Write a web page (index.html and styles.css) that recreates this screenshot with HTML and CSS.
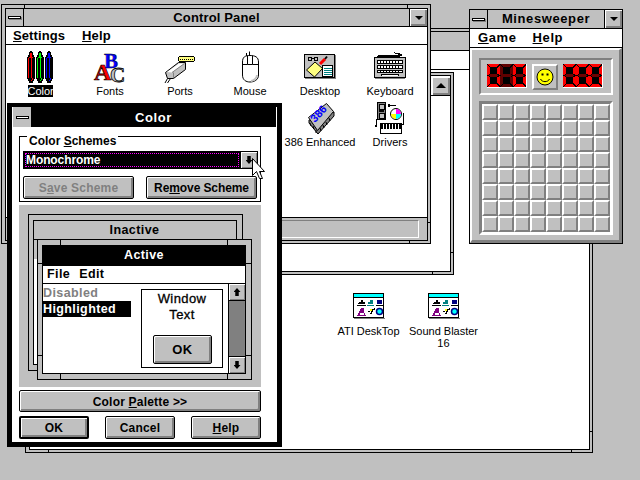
FILE: index.html
```html
<!DOCTYPE html>
<html lang="en">
<head>
<meta charset="utf-8">
<title>Windows 3.1 Control Panel</title>
<link rel="stylesheet" href="styles.css">
</head>
<body>
<div class="win progman">
  <div class="inner">
    <div class="titlebar"></div>
    <div class="menubar"></div>
    <div class="pm-client">
      <div class="pm-icon">
        <svg class="ico" width="32" height="26" viewBox="0 0 32 26" shape-rendering="crispEdges"><use href="#groupicon"/></svg>
        <span class="label">ATI DeskTop</span>
      </div>
      <div class="pm-icon">
        <svg class="ico" width="32" height="26" viewBox="0 0 32 26" shape-rendering="crispEdges"><use href="#groupicon"/></svg>
        <span class="label">Sound Blaster<br>16</span>
      </div>
    </div>
  </div>
  <i class="tick pm-t1"></i><i class="tick pm-t2"></i><i class="tick pm-t3"></i>
</div>

<div class="win groupwin">
  <div class="inner group-inner"><div class="scroll-up"><i class="arrow-up"></i></div></div>
  <i class="tick gw-t1"></i><i class="tick gw-t2"></i>
</div>

<div class="win control">
  <div class="inner">
    <div class="titlebar">
      <div class="minbox"><i class="dash"></i></div>
      <div class="titletext cp-titletext">Control Panel</div>
      <div class="dropbtn"><i class="arrow-down"></i></div>
    </div>
    <div class="menubar cp-menu">
      <span class="menu"><u>S</u>ettings</span>
      <span class="menu"><u>H</u>elp</span>
    </div>
    <div class="cp-client">
      <div class="cell">
        <svg class="ico" width="26" height="32" viewBox="0 0 26 32" shape-rendering="crispEdges">
          <g><path d="M3 0h2v1h1v3h1v2h1v22h-1v2h-1v2h-4v-2h-1v-2h-1v-22h1v-2h1v-3h1z" fill="#000"/><path d="M3 2h2v4h1v1h-1v20h1v2h-1v1h-1v-1h1v-2h-1v-20h-2v20h-1v-20h1v-1h1z" fill="#ff0000"/></g>
          <g transform="translate(9)"><path d="M3 0h2v1h1v3h1v2h1v22h-1v2h-1v2h-4v-2h-1v-2h-1v-22h1v-2h1v-3h1z" fill="#000"/><path d="M3 2h2v4h1v1h-1v20h1v2h-1v1h-1v-1h1v-2h-1v-20h-2v20h-1v-20h1v-1h1z" fill="#00ff00"/></g>
          <g transform="translate(18)"><path d="M3 0h2v1h1v3h1v2h1v22h-1v2h-1v2h-4v-2h-1v-2h-1v-22h1v-2h1v-3h1z" fill="#000"/><path d="M3 2h2v4h1v1h-1v20h1v2h-1v1h-1v-1h1v-2h-1v-20h-2v20h-1v-20h1v-1h1z" fill="#0000ff"/></g>
        </svg>
        <span class="label selected">Color</span>
      </div>
      <div class="cell">
        <svg class="ico" width="34" height="32" viewBox="0 0 34 32">
          <text x="11" y="17" class="f-b">B</text>
          <text x="17" y="31" class="f-c">C</text>
          <text x="1" y="29" class="f-a">A</text>
        </svg>
        <span class="label">Fonts</span>
      </div>
      <div class="cell">
        <svg class="ico" width="32" height="32" viewBox="0 0 32 32">
          <g shape-rendering="crispEdges">
            <path d="M14 6h1v-1h15v1h1v4h-1v1h-15v-1h-1z" fill="#000"/>
            <path d="M15 6h15v4h-15z" fill="#ffff80"/>
            <path d="M16 8h1v1h-1zM18 8h1v1h-1zM20 8h1v1h-1zM22 8h1v1h-1zM24 8h1v1h-1zM26 8h1v1h-1zM28 8h1v1h-1z" fill="#000"/>
          </g>
          <path d="M1.500 21.500L14.500 11.500H21.500V18.500L9.500 27.500H3.500Z" fill="#c0c0c0" stroke="#000"/>
          <path d="M3 21L15 12.500H20L8 21.500Z" fill="#fff"/>
          <path d="M9.500 21.500V27M8 21.500L20.500 12.500" fill="none" stroke="#808080"/>
          <path d="M3.500 27.500L1 32M6.500 27.500L3.500 32" fill="none" stroke="#000"/>
        </svg>
        <span class="label">Ports</span>
      </div>
      <div class="cell">
        <svg class="ico" width="32" height="32" viewBox="0 0 32 32">
          <path d="M15.500 0.500V5M12.500 2V5" fill="none" stroke="#000"/>
          <path d="M8.500 11C8.500 6 11 4.500 16 4.500S24.500 6 24.500 11V24C24.500 29 20 31 16 31S8.500 29 8.500 24Z" fill="#fff" stroke="#000"/>
          <path d="M13.500 5V13.500H18.500V5M8.500 13.500H13.500M18.500 13.500H24.500" fill="none" stroke="#000"/>
          <path d="M23 24C23 27 20 29.500 17 30" fill="none" stroke="#c0c0c0" stroke-width="2"/>
        </svg>
        <span class="label">Mouse</span>
      </div>
      <div class="cell">
        <svg class="ico" width="32" height="32" viewBox="0 -3 32 32" shape-rendering="crispEdges">
          <rect x="0.500" y="0.500" width="30" height="23" fill="#c0c0c0" stroke="#000"/>
          <rect x="1" y="24" width="31" height="1" fill="#808080"/>
          <rect x="31" y="1" width="1" height="23" fill="#808080"/>
          <path d="M4.500 3.500h3v3h-3zM10.500 3.500h3v3h-3z" fill="none" stroke="#000"/>
          <path d="M7 4h3v1H7z" fill="#000"/>
          <path d="M2.500 16L11 8L18.500 14.500L10.500 23Z" fill="#ffff80" stroke="#000" shape-rendering="auto"/>
          <path d="M16 10L21 5" stroke="#ff0000" stroke-width="3" shape-rendering="auto"/>
          <path d="M21 5L23 2.500" stroke="#000" stroke-width="2" shape-rendering="auto"/>
          <rect x="18.500" y="11.500" width="10" height="11" fill="#fff" stroke="#000"/>
          <path d="M20 14h8M20 16h8M20 18h8M20 20h8" stroke="#008080"/>
        </svg>
        <span class="label">Desktop</span>
      </div>
      <div class="cell">
        <svg class="ico" width="32" height="32" viewBox="0 0 32 32" shape-rendering="crispEdges">
          <path d="M20 1h1v1h-1zM21 2h5v1h2v2h-2v1H3v-1h1v-1h20v-1h-3z" fill="#000"/>
          <rect x="0.500" y="6.500" width="31" height="20" rx="1" fill="#c0c0c0" stroke="#000"/>
          <path d="M1 27h30v1H1z" fill="#808080"/>
          <path d="M3 9h26v4H3zM3 14h26v4H3zM3 19h26v3H3zM7 23h18v2H7z" fill="#000"/>
          <path d="M4 10h2v2H4zM7 10h2v2H7zM10 10h2v2h-2zM13 10h2v2h-2zM16 10h2v2h-2zM19 10h2v2h-2zM22 10h2v2h-2zM25 10h3v2h-3zM4 15h2v2H4zM7 15h2v2H7zM10 15h2v2h-2zM13 15h2v2h-2zM16 15h2v2h-2zM19 15h2v2h-2zM22 15h2v2h-2zM25 15h3v2h-3zM4 20h2v1H4zM7 20h2v1H7zM10 20h2v1h-2zM13 20h2v1h-2zM16 20h2v1h-2zM19 20h2v1h-2zM22 20h2v1h-2zM25 20h3v1h-3zM8 24h16v1H8z" fill="#fff"/>
        </svg>
        <span class="label">Keyboard</span>
      </div>
      <div class="cell cell-386">
        <svg class="ico" width="34" height="32" viewBox="0 0 34 32">
          <path d="M6 18V21L15 32L31 14V10Z" fill="#808080" stroke="#000"/>
          <path d="M5.500 15.500L23.500 1.500L30.500 9.500L14.500 28.500Z" fill="#c0c0c0" stroke="#000"/>
          <path d="M7 21L8 24M10 24L11 27M13 28L13 31M17 26L18 29M20 23L21 26M23 20L24 23M26 16L27 19" stroke="#000"/>
          <text x="0" y="0" class="chip-text" transform="translate(12 21) rotate(-47)">386</text>
        </svg>
        <span class="label">386 Enhanced</span>
      </div>
      <div class="cell">
        <svg class="ico" width="32" height="32" viewBox="0 0 32 32" shape-rendering="crispEdges">
          <rect x="3.500" y="0.500" width="8" height="17" fill="#808080" stroke="#000"/>
          <rect x="5" y="2" width="5" height="5" fill="#c0c0c0" stroke="#000"/>
          <rect x="5" y="11" width="5" height="5" fill="#c0c0c0" stroke="#000"/>
          <path d="M5 8h5v2H5z" fill="#000"/>
          <circle cx="22" cy="12" r="5.500" fill="#fff" stroke="#000" shape-rendering="auto"/>
          <path d="M22 12L22 7A5 5 0 0 1 27 12Z" fill="#ff00ff" shape-rendering="auto"/>
          <path d="M22 12L27 12A5 5 0 0 1 22 17Z" fill="#00ffff" shape-rendering="auto"/>
          <path d="M22 12L22 17A5 5 0 0 1 17 12Z" fill="#ffff00" shape-rendering="auto"/>
          <path d="M14 3h8v1h-7v1h-1zM14 2h2v3h-2zM2 17h1v8H1v-2h1zM29 11h1v12h-2v-1h1z" fill="#000"/>
          <rect x="6.500" y="21.500" width="21" height="10" fill="#fff" stroke="#000"/>
          <path d="M7 22h20v5H7z" fill="#000"/>
          <path d="M9 22h1v6H9zM12 22h1v6h-1zM15 22h1v6h-1zM18 22h1v6h-1zM21 22h1v6h-1zM24 22h1v6h-1z" fill="#fff"/>
        </svg>
        <span class="label">Drivers</span>
      </div>
    </div>
    <div class="statusbar"><div class="sunken"></div></div>
  </div>
  <i class="tick cp-t1"></i><i class="tick cp-t2"></i><i class="tick cp-t3"></i><i class="tick cp-t4"></i>
</div>

<div class="dialog">
  <div class="d-title">
    <div class="d-min"><i class="dash"></i></div>
    <div class="d-text">Color</div>
  </div>
  <div class="d-client">
    <div class="groupbox">
      <div class="legend">Color <u>S</u>chemes</div>
      <div class="combo">
        <div class="combo-field"><span class="combo-focus">Monochrome</span></div>
        <div class="combo-btn"><i class="arrow-fat"></i></div>
      </div>
      <div class="scheme-row">
        <div class="btn btn-disabled scheme-btn"><span>S<u>a</u>ve Scheme</span></div>
        <div class="btn scheme-btn tight"><span>Re<u>m</u>ove Scheme</span></div>
      </div>
    </div>

    <div class="sample">
      <div class="s-frame s-f1"></div>
      <div class="s-frame s-f2"><div class="s-inactive">Inactive</div><div class="s-whitebar"></div></div>
      <div class="s-active">
        <div class="s-inner">
          <div class="s-title">Active</div>
          <div class="s-menu"><span>File</span><span>Edit</span></div>
          <div class="s-body">
            <div class="s-list">
              <div class="s-item s-disabled">Disabled</div>
              <div class="s-item s-high">Highlighted</div>
            </div>
            <div class="s-text">
              <div class="s-wt">Window<br>Text</div>
              <div class="btn s-ok">OK</div>
            </div>
            <div class="s-scroll">
              <div class="s-sbtn"><i class="arrow-fat up"></i></div>
              <div class="s-track"></div>
              <div class="s-sbtn"><i class="arrow-fat"></i></div>
            </div>
          </div>
        </div>
        <i class="tick s-t1"></i><i class="tick s-t2"></i><i class="tick s-t3"></i><i class="tick s-t4"></i>
        <i class="tick s-t5"></i><i class="tick s-t6"></i><i class="tick s-t7"></i><i class="tick s-t8"></i>
      </div>
    </div>

    <div class="btn palette"><span>Color <u>P</u>alette &gt;&gt;</span></div>
    <div class="d-actions">
      <div class="btn btn-default d-btn">OK</div>
      <div class="btn d-btn">Cancel</div>
      <div class="btn d-btn"><span><u>H</u>elp</span></div>
    </div>
  </div>
</div>

<div class="mine">
  <div class="titlebar m-title">
    <div class="minbox"><i class="dash"></i></div>
    <div class="titletext">Minesweeper</div>
    <div class="dropbtn"><i class="arrow-down"></i></div>
  </div>
  <div class="menubar m-menu">
    <span class="menu"><u>G</u>ame</span>
    <span class="menu"><u>H</u>elp</span>
  </div>
  <div class="m-body">
    <div class="m-head">
      <div class="counter">
        <svg class="digit" width="13" height="23" viewBox="0 0 13 23" shape-rendering="crispEdges"><use href="#dig0"/></svg>
        <svg class="digit" width="13" height="23" viewBox="0 0 13 23" shape-rendering="crispEdges"><use href="#digoff"/></svg>
        <svg class="digit" width="13" height="23" viewBox="0 0 13 23" shape-rendering="crispEdges"><use href="#dig0"/></svg>
      </div>
      <div class="smile">
        <svg width="18" height="18" viewBox="0 0 18 18"><circle cx="9" cy="9" r="8" fill="#ffff00" stroke="#000"/><rect x="5.500" y="5.500" width="2" height="2"/><rect x="10.500" y="5.500" width="2" height="2"/><path d="M4.500 11C6 14.500 12 14.500 13.500 11" fill="none" stroke="#000"/></svg>
      </div>
      <div class="counter">
        <svg class="digit" width="13" height="23" viewBox="0 0 13 23" shape-rendering="crispEdges"><use href="#dig0"/></svg>
        <svg class="digit" width="13" height="23" viewBox="0 0 13 23" shape-rendering="crispEdges"><use href="#dig0"/></svg>
        <svg class="digit" width="13" height="23" viewBox="0 0 13 23" shape-rendering="crispEdges"><use href="#dig0"/></svg>
      </div>
    </div>
    <div class="m-grid">
      <i></i><i></i><i></i><i></i><i></i><i></i><i></i><i></i>
      <i></i><i></i><i></i><i></i><i></i><i></i><i></i><i></i>
      <i></i><i></i><i></i><i></i><i></i><i></i><i></i><i></i>
      <i></i><i></i><i></i><i></i><i></i><i></i><i></i><i></i>
      <i></i><i></i><i></i><i></i><i></i><i></i><i></i><i></i>
      <i></i><i></i><i></i><i></i><i></i><i></i><i></i><i></i>
      <i></i><i></i><i></i><i></i><i></i><i></i><i></i><i></i>
      <i></i><i></i><i></i><i></i><i></i><i></i><i></i><i></i>
    </div>
  </div>
</div>

<svg class="cursor" width="14" height="23" viewBox="0 0 14 23">
  <path d="M0.500 0.500V17.500L4.500 13.500L7.500 20.500H10.500L7.500 13.500H12.500Z" fill="#fff" stroke="#000"/>
</svg>

<svg class="defs" width="0" height="0" aria-hidden="true">
  <defs>
    <g id="groupicon">
      <rect x="0.500" y="0.500" width="30" height="24" fill="#fff" stroke="#000"/>
      <rect x="1" y="25" width="31" height="1" fill="#808080"/>
      <rect x="1" y="1" width="29" height="3" fill="#00ffff"/>
      <path d="M1 4h29v1H1z" fill="#000"/>
      <path d="M6 9h2V7h2v2h2v2H5v-1h1zM4 12h9v1H4z" fill="#000"/>
      <path d="M15 9h2V7h3v4h-5zM14 12h7v1h-7z" fill="#008080"/>
      <path d="M24 7h5v4h-5z" fill="#000080"/><path d="M23 12h7v1h-7z" fill="#000"/>
      <path d="M8 15h3v5h1v2h-1v-2H7v2H5v-2h1v-2h1v-2h1z" fill="#800080"/>
      <path d="M4 22h9v1H4z" fill="#800080"/>
      <path d="M15 18h2v2h1v-2h1v-2h2v-1h1v2h-2v2h-1v2h-2v-2h-2z" fill="#000"/><path d="M17 16h2v2h-2z" fill="#ffff00"/>
      <circle cx="26.500" cy="18.500" r="3" fill="#00ffff" stroke="#000080" stroke-width="1.500" shape-rendering="auto"/>
    </g>
    <g id="digoff">
      <rect width="13" height="23" fill="#000"/>
      <path d="M1 0h11l-2 3H3zM0 1l3 3v6l-3 1zM13 1l-3 3v6l3 1zM0 12l3 1v6l-3 3zM13 12l-3 1v6l3 3zM3 20h7l2 3H1zM2 10h9l1 1.500-1 1.500H2l-1-1.500z" fill="#600000"/>
    </g>
    <g id="dig0">
      <rect width="13" height="23" fill="#000"/>
      <path d="M1 0h11l-2 3H3zM0 1l3 3v6l-3 1zM13 1l-3 3v6l3 1zM0 12l3 1v6l-3 3zM13 12l-3 1v6l3 3zM3 20h7l2 3H1z" fill="#ff0000"/>
      <path d="M3 10h7l1 1.500-1 1.500H3l-1-1.500z" fill="#700000"/>
    </g>
  </defs>
</svg>
</body>
</html>
```
FILE: styles.css
```css
* { box-sizing: border-box; }
html, body { margin: 0; padding: 0; height: 100%; }
body {
  width: 640px; height: 480px; overflow: hidden; position: relative;
  background: #c0c0c0; color: #000;
  font: 11px/12px "Liberation Sans", Arial, sans-serif;
}
i { display: block; font-style: normal; }
.defs { position: absolute; }

/* desktop windows */
.win { position: absolute; border: 1px solid #000; background: #c0c0c0; padding: 2px; }
.inner { border: 1px solid #000; background: #fff; height: 100%; display: flex; flex-direction: column; }
.tick { position: absolute; background: #000; }

.progman { left: 25px; top: 28px; width: 568px; height: 425px; padding-left: 3px; }
.pm-t1 { left: 545px; bottom: 0; width: 1px; height: 3px; }
.pm-t2 { right: 0; top: 402px; width: 3px; height: 1px; }
.pm-t3 { left: 22px; bottom: 0; width: 1px; height: 3px; }
.progman .titlebar { background: #c0c0c0; height: 19px; border-bottom: 1px solid #000; }
.progman .menubar { height: 19px; }
.pm-client { flex: 1; display: flex; padding: 223px 0 0 301px; }
.pm-icon { width: 75px; display: flex; flex-direction: column; align-items: center; text-align: center; }
.pm-icon .ico { margin-bottom: 6px; }

.groupwin { left: 100px; top: 72px; width: 354px; height: 203px; }
.scroll-up {
  margin: 0 0 0 auto; width: 20px; height: 20px; border-bottom: 1px solid #000; border-left: 1px solid #000;
  background: #c0c0c0; box-shadow: inset 2px 2px 0 #fff, inset -2px -2px 0 #808080;
  display: flex; align-items: center; justify-content: center;
}
.gw-t1 { right: 0; top: 179px; width: 3px; height: 1px; }
.gw-t2 { left: 331px; bottom: 0; width: 1px; height: 3px; }

.control { left: 1px; top: 4px; width: 430px; height: 240px; padding: 3px 2px 2px 3px; }
.cp-t1 { left: 22px; top: 0; width: 1px; height: 3px; }
.cp-t2 { right: 22px; top: 0; width: 1px; height: 3px; }
.cp-t3 { right: 0; top: 217px; width: 3px; height: 1px; }
.cp-t4 { left: 407px; bottom: 0; width: 1px; height: 3px; }

.titlebar { display: flex; height: 18px; background: #c0c0c0; border-bottom: 1px solid #000; flex: none; }
.minbox { width: 18px; border-right: 1px solid #000; display: flex; align-items: center; justify-content: center; }
.dash { width: 13px; height: 3px; background: #fff; border: 1px solid #000; box-shadow: 1px 1px 0 #808080; }
.titletext { flex: 1; text-align: center; font: bold 13px/17px "Liberation Sans", Arial, sans-serif; letter-spacing: 0.6px; }
.cp-titletext { letter-spacing: 0.15px; }
.dropbtn {
  width: 18px; border-left: 1px solid #000; background: #c0c0c0;
  box-shadow: inset 1px 1px 0 #fff, inset -2px -2px 0 #808080;
  display: flex; align-items: center; justify-content: center;
}
.arrow-down { width: 0; height: 0; border: 4px solid transparent; border-top: 4px solid #000; border-bottom: 0; }
.arrow-up { width: 0; height: 0; border: 5px solid transparent; border-bottom: 5px solid #000; border-top: 0; }
.arrow-fat { width: 7px; height: 8px; background: #000; clip-path: polygon(50% 100%, 0 50%, 25% 50%, 25% 0, 75% 0, 75% 50%, 100% 50%); }
.arrow-fat.up { transform: scaleY(-1); }

.menubar {
  display: flex; gap: 17px; height: 18px; padding-left: 7px; background: #fff;
  border-bottom: 1px solid #000; flex: none;
  font: bold 13px/18px "Liberation Sans", Arial, sans-serif; letter-spacing: 0.6px;
}
.cp-menu { letter-spacing: 0.1px; }

.cp-client { flex: 1; display: grid; grid-template-columns: repeat(6, 70px); grid-auto-rows: 51px; padding: 6px 0 0 0; margin-left: -1px; }
.cell { display: flex; flex-direction: column; align-items: center; }
.ico { display: block; flex: none; }
.cell .label { margin-top: 2px; height: 12px; }
.label { white-space: nowrap; font-size: 11px; }
.selected { background: #000; color: #fff; width: 25px; text-align: center; }
.cell-386 { grid-column: 5; }
.f-a { font: bold 24px "Liberation Serif", serif; fill: #ff0000; stroke: #000; stroke-width: 0.700px; }
.f-b { font: bold 21px "Liberation Serif", serif; fill: #0000ff; stroke: #000; stroke-width: 0.400px; }
.f-c { font: bold 21px "Liberation Serif", serif; fill: #c0c0c0; stroke: #000; stroke-width: 0.800px; }
.chip-text { font: bold 11px "Liberation Sans", sans-serif; fill: #0000ff; }

.statusbar { flex: none; height: 23px; background: #c0c0c0; border-top: 1px solid #000; padding: 2px 8px 2px 4px; }
.sunken { height: 18px; border: 1px solid; border-color: #808080 #fff #fff #808080; }

/* Color dialog */
.dialog {
  position: absolute; left: 7px; top: 103px; width: 275px; height: 344px;
  border: solid #000; border-width: 4px 5px 5px; background: #fff; display: flex; flex-direction: column;
}
.d-title { display: flex; height: 20px; margin: 0 1px; flex: none; }
.d-min { width: 18px; background: #c0c0c0; display: flex; align-items: center; justify-content: center; }
.d-min .dash { box-shadow: none; }
.d-text { flex: 1; background: #000; color: #fff; text-align: center; font: bold 13px/21px "Liberation Sans", Arial, sans-serif; letter-spacing: 0.6px; }
.d-client { padding: 9px 0 0 7px; width: 249px; font: bold 12px/14px "Liberation Sans", Arial, sans-serif; letter-spacing: 0.2px; }

.groupbox { width: 242px; height: 66px; border: 1px solid #000; padding: 0 1px 0 3px; }
.legend { margin: -3px 0 0 4px; width: fit-content; padding: 0 2px; background: #fff; height: 14px; letter-spacing: 0; margin-bottom: 3px; }
.combo { display: flex; width: 235px; height: 18px; border: 1px solid #000; }
.combo-field { flex: 1; background: #000; padding: 1px; }
.combo-focus { display: block; height: 100%; border: 1px dotted #ff00ff; color: #fff; font-size: 12px; line-height: 12px; letter-spacing: -0.1px; }
.combo-btn { width: 17px; border-left: 1px solid #000; background: #c0c0c0; box-shadow: inset 1px 1px 0 #fff, inset -1px -1px 0 #808080; display: flex; align-items: center; justify-content: center; }
.scheme-row { display: flex; justify-content: space-between; width: 234px; margin-top: 7px; }

.btn {
  display: flex; align-items: center; justify-content: center;
  border: 1px solid #000; border-radius: 2px; background: #c0c0c0;
  box-shadow: inset 1px 1px 0 #fff, inset -2px -2px 0 #808080;
  white-space: nowrap;
}
.btn u { text-underline-offset: 1px; }
.btn-disabled { color: #808080; }
.scheme-btn { width: 111px; height: 23px; }
.tight { letter-spacing: -0.1px; }

.sample { position: relative; margin-top: 3px; width: 242px; height: 182px; background: #c0c0c0; letter-spacing: 0.4px; }
.s-frame { position: absolute; border: 1px solid #000; background: #c0c0c0; }
.s-f1 { left: 9px; top: 9px; width: 215px; height: 157px; }
.s-f2 { left: 14px; top: 15px; width: 204px; height: 145px; display: flex; flex-direction: column; }
.s-inactive { height: 19px; text-align: center; line-height: 18px; font-size: 12.500px; border-bottom: 1px solid #000; padding-right: 1px; }
.s-whitebar { margin-top: 19px; width: 4px; height: 106px; background: #fff; }
.s-active { position: absolute; left: 18px; top: 34px; width: 215px; height: 141px; border: 1px solid #000; background: #c0c0c0; padding: 5px 5px 5px 4px; }
.s-inner { height: 100%; border: 1px solid #000; background: #fff; display: flex; flex-direction: column; }
.s-title { height: 20px; background: #000; color: #fff; text-align: center; line-height: 18px; font-size: 12.500px; flex: none; }
.s-menu { height: 18px; border-bottom: 1px solid #000; display: flex; gap: 9px; padding-left: 4px; line-height: 17px; font-size: 12.500px; flex: none; }
.s-body { flex: 1; display: flex; }
.s-list { width: 88px; flex: none; padding-top: 1px; }
.s-item { height: 16px; line-height: 16px; font-size: 12.500px; }
.s-disabled { color: #808080; }
.s-high { background: #000; color: #fff; }
.s-text { width: 82px; height: 79px; margin: 5px 0 0 10px; border: 1px solid #000; text-align: center; font-weight: normal; -webkit-text-stroke: 0.300px #000; flex: none; }
.s-wt { font-size: 13px; line-height: 16px; padding-top: 1px; }
.s-ok { width: 59px; height: 29px; margin: 12px 0 0 11px; font-weight: bold; font-size: 13px; -webkit-text-stroke: 0; }
.s-scroll { margin-left: auto; width: 17px; border-left: 1px solid #000; display: flex; flex-direction: column; }
.s-sbtn { flex: none; height: 16px; background: #c0c0c0; box-shadow: inset 1px 1px 0 #fff, inset -1px -1px 0 #808080; display: flex; align-items: center; justify-content: center; }
.s-track { flex: 1; background: #808080; border: solid #000; border-width: 1px 0; }
.s-t1 { left: 22px; top: 0; width: 1px; height: 5px; }
.s-t2 { right: 23px; top: 0; width: 1px; height: 5px; }
.s-t3 { left: 22px; bottom: 0; width: 1px; height: 5px; }
.s-t4 { right: 23px; bottom: 0; width: 1px; height: 5px; }
.s-t5 { left: 0; top: 23px; width: 4px; height: 1px; }
.s-t6 { right: 0; top: 23px; width: 5px; height: 1px; }
.s-t7 { left: 0; bottom: 23px; width: 4px; height: 1px; }
.s-t8 { right: 0; bottom: 23px; width: 5px; height: 1px; }

.palette { width: 242px; height: 22px; margin-top: 3px; padding-top: 1px; }
.d-actions { display: flex; justify-content: space-between; width: 242px; margin-top: 4px; }
.d-btn { width: 70px; height: 23px; }
.btn-default { border-width: 2px; }

/* Minesweeper */
.mine { position: absolute; left: 469px; top: 9px; width: 154px; height: 235px; border: 1px solid #000; background: #c0c0c0; display: flex; flex-direction: column; }
.m-title { height: 19px; }
.m-menu { height: 19px; padding-left: 8px; gap: 16px; }
.m-body {
  flex: 1; padding: 8px 8px 0 7px;
  border: solid; border-width: 2px 3px 3px 2px; border-color: #fff #808080 #808080 #fff;
}
.m-head {
  width: 134px; height: 37px; display: flex; justify-content: space-between; align-items: flex-start;
  border: 2px solid; border-color: #808080 #fff #fff #808080; padding: 4px 8px 0 6px;
}
.counter { display: flex; border: solid; border-width: 0 1px 1px 0; border-color: #fff; background: #000; }
.digit { display: block; }
.smile {
  width: 26px; height: 26px; background: #c0c0c0; display: flex; align-items: center; justify-content: center;
  border: 2px solid; border-color: #fff #808080 #808080 #fff;
}
.m-grid {
  width: 134px; margin-top: 6px; display: grid; grid-template-columns: repeat(8, 16px); grid-auto-rows: 16px;
  border: 3px solid; border-color: #808080 #fff #fff #808080;
}
.m-grid i { border: 2px solid; border-color: #fff #808080 #808080 #fff; background: #c0c0c0; }

.cursor { position: absolute; left: 252px; top: 158px; }
```
